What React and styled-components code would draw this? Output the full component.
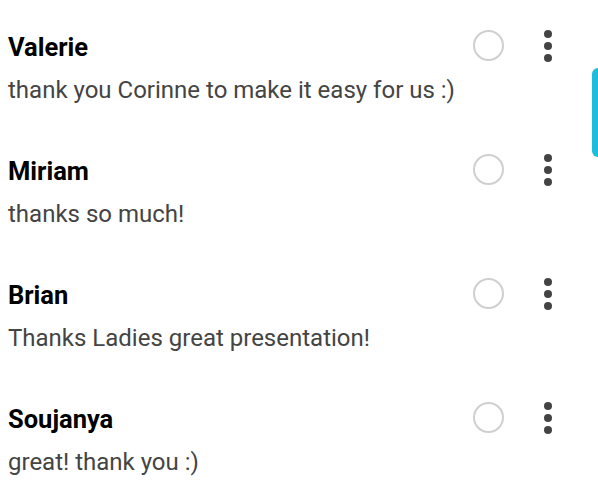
import React from "react";
import styled, { createGlobalStyle } from "styled-components";

const GlobalStyle = createGlobalStyle`
  html, body {
    margin: 0;
    padding: 0;
    background: #ffffff;
    font-family: Roboto, "Liberation Sans", sans-serif;
  }
`;

const Page = styled.div`
  position: relative;
  width: 598px;
  height: 504px;
  overflow: hidden;
  background: #fff;
`;

const List = styled.ul`
  list-style: none;
  margin: 0;
  padding: 29px 0 0 8px;
  display: flex;
  flex-direction: column;
  gap: 49px;
`;

const Item = styled.li`
  display: flex;
  flex-direction: column;
  gap: 11px;
`;

const Head = styled.div`
  display: flex;
  align-items: center;
  height: 36px;
`;

const Name = styled.span`
  flex: 1;
  font-size: 25.5px;
  font-weight: 700;
  color: #000;
`;

const Check = styled.span`
  width: 27px;
  height: 27px;
  border: 2px solid #cfcfcf;
  border-radius: 50%;
  margin-right: 40px;
  margin-top: -3px;
`;

const Dots = styled.span`
  display: flex;
  flex-direction: column;
  gap: 4px;
  margin-right: 46px;
  margin-top: -3px;
  span {
    width: 8px;
    height: 8px;
    border-radius: 50%;
    background: #444;
  }
`;

const Message = styled.p`
  margin: 0;
  font-size: 24px;
  color: #444;
  line-height: 28px;
`;

const ScrollThumb = styled.div`
  position: absolute;
  right: 0;
  top: 68px;
  width: 6px;
  height: 89px;
  border-radius: 6px 0 0 6px;
  background: #1ebde0;
`;

const comments = [
  { name: "Valerie", text: "thank you Corinne to make it easy for us :)" },
  { name: "Miriam", text: "thanks so much!" },
  { name: "Brian", text: "Thanks Ladies great presentation!" },
  { name: "Soujanya", text: "great! thank you :)" },
];

export default function App() {
  return (
    <Page>
      <GlobalStyle />
      <List>
        {comments.map((c) => (
          <Item key={c.name}>
            <Head>
              <Name>{c.name}</Name>
              <Check />
              <Dots>
                <span />
                <span />
                <span />
              </Dots>
            </Head>
            <Message>{c.text}</Message>
          </Item>
        ))}
      </List>
      <ScrollThumb />
    </Page>
  );
}
